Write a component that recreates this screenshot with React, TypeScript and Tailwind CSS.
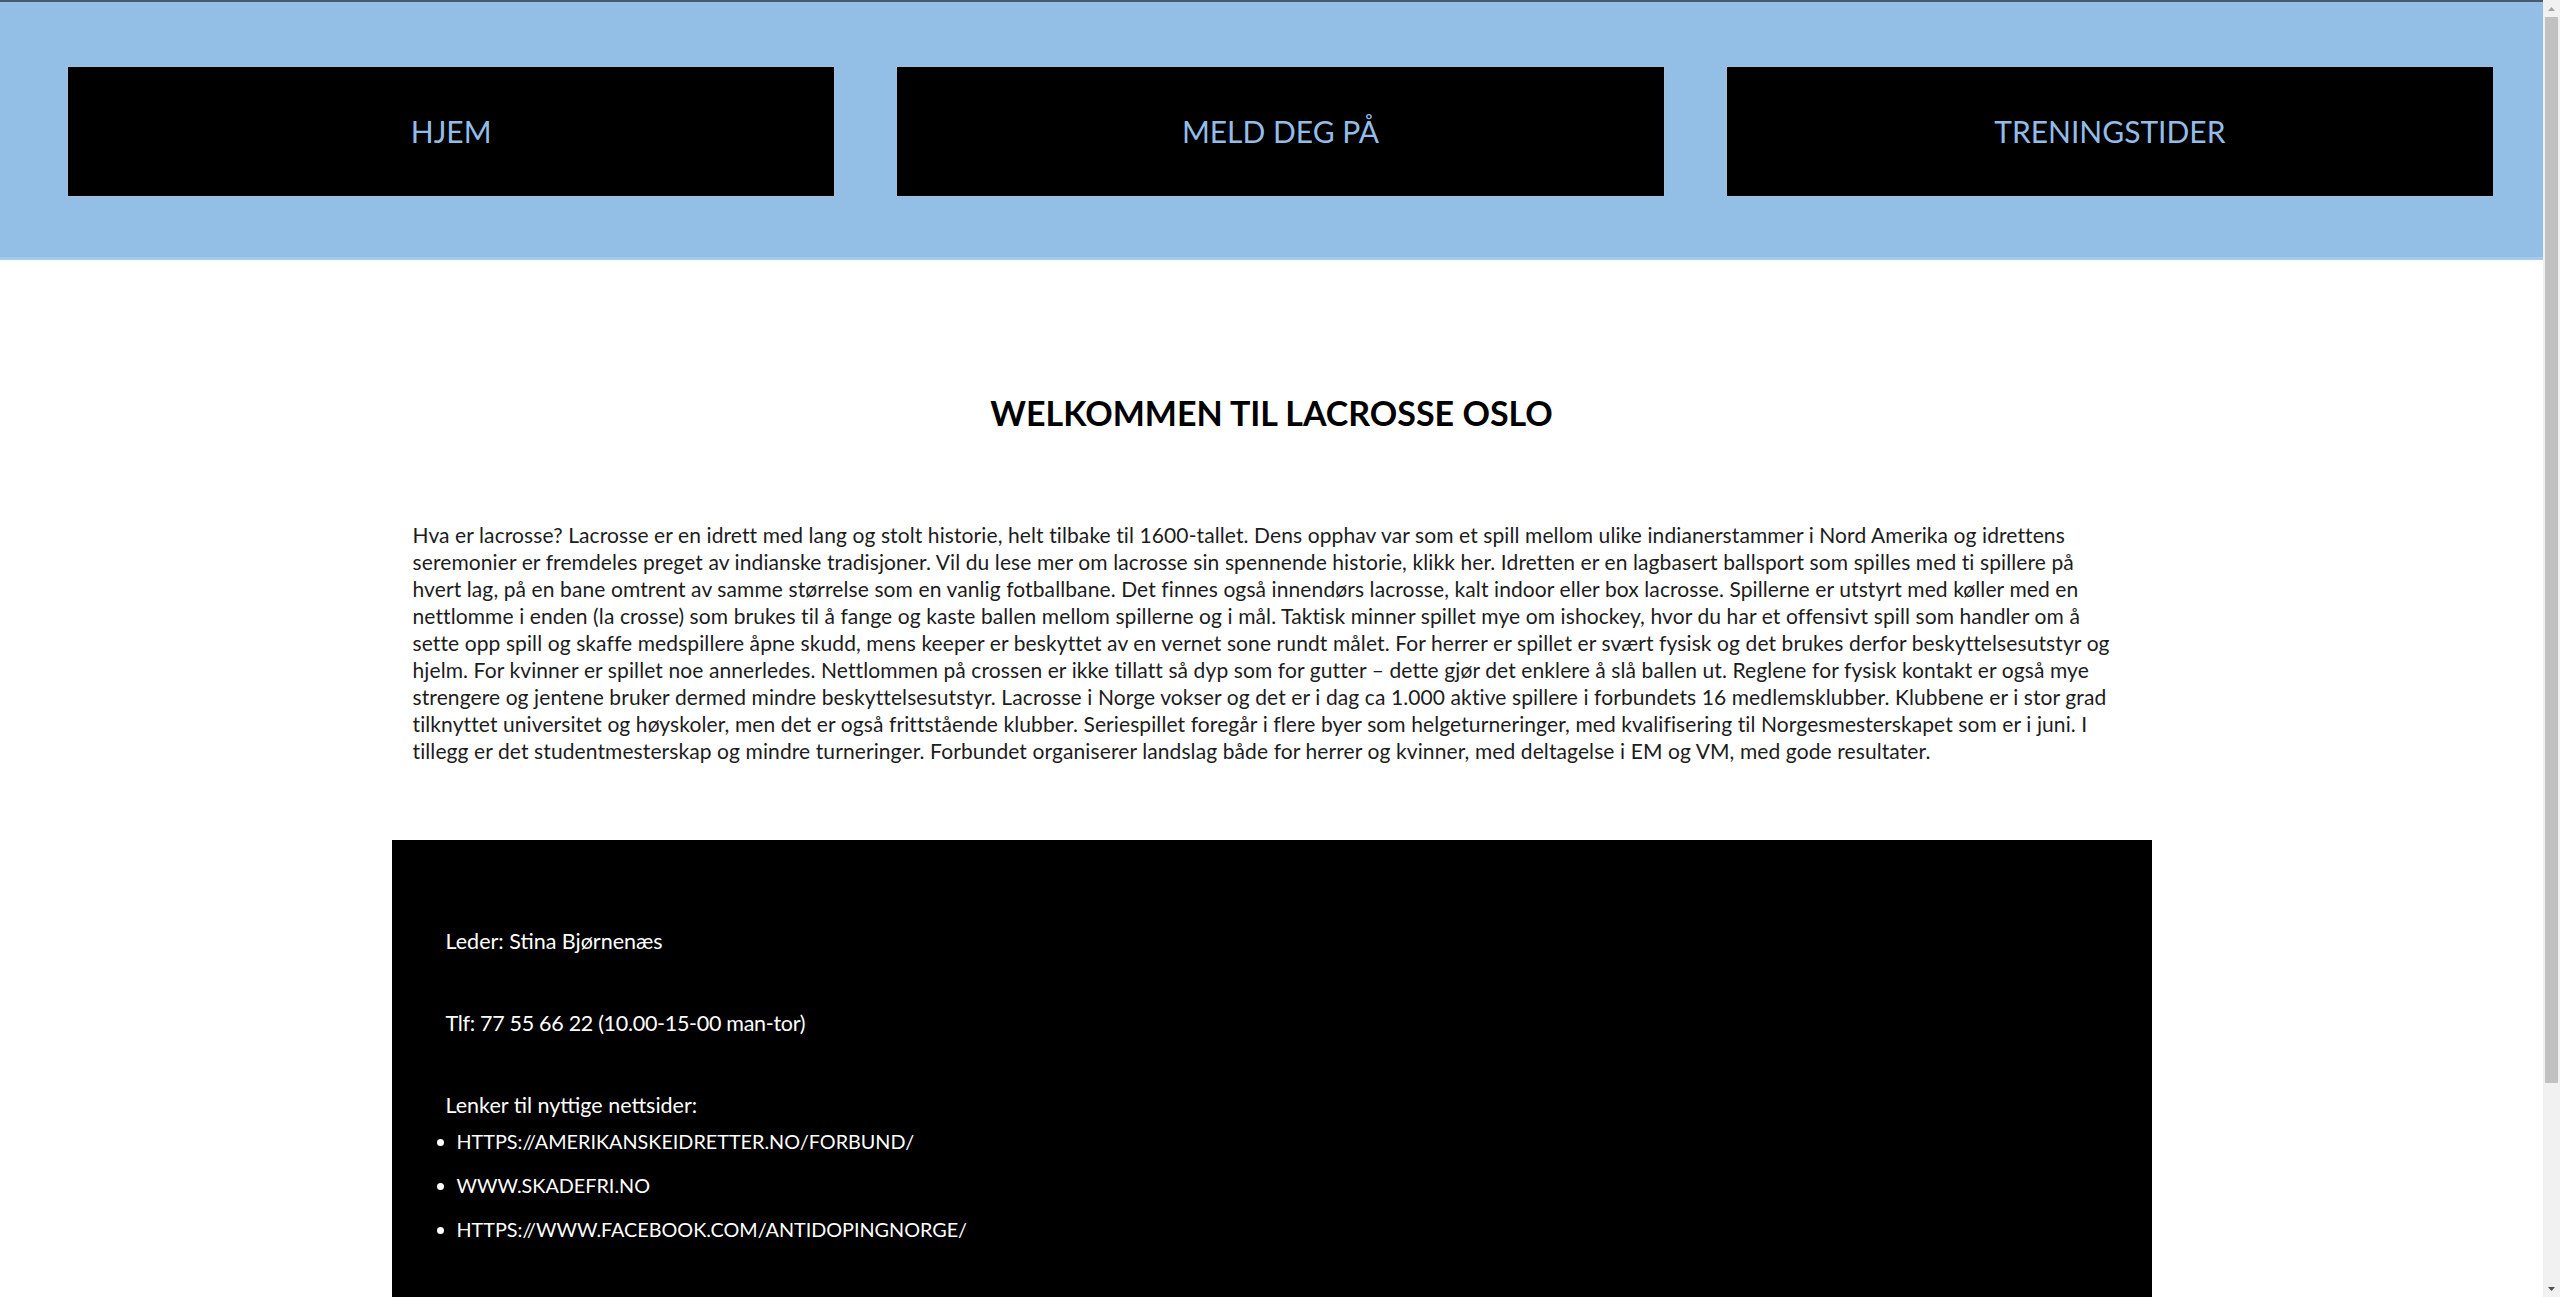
import React from 'react'

const navItems = ['HJEM', 'MELD DEG PÅ', 'TRENINGSTIDER']

const links = [
  'https://amerikanskeidretter.no/forbund/',
  'www.skadefri.no',
  'https://www.facebook.com/antidopingnorge/',
]

// linjeskift som i originalen
const intro = [
  'Hva er lacrosse? Lacrosse er en idrett med lang og stolt historie, helt tilbake til 1600-tallet. Dens opphav var som et spill mellom ulike indianerstammer i Nord Amerika og idrettens',
  'seremonier er fremdeles preget av indianske tradisjoner. Vil du lese mer om lacrosse sin spennende historie, klikk her. Idretten er en lagbasert ballsport som spilles med ti spillere på',
  'hvert lag, på en bane omtrent av samme størrelse som en vanlig fotballbane. Det finnes også innendørs lacrosse, kalt indoor eller box lacrosse. Spillerne er utstyrt med køller med en',
  'nettlomme i enden (la crosse) som brukes til å fange og kaste ballen mellom spillerne og i mål. Taktisk minner spillet mye om ishockey, hvor du har et offensivt spill som handler om å',
  'sette opp spill og skaffe medspillere åpne skudd, mens keeper er beskyttet av en vernet sone rundt målet. For herrer er spillet er svært fysisk og det brukes derfor beskyttelsesutstyr og',
  'hjelm. For kvinner er spillet noe annerledes. Nettlommen på crossen er ikke tillatt så dyp som for gutter – dette gjør det enklere å slå ballen ut. Reglene for fysisk kontakt er også mye',
  'strengere og jentene bruker dermed mindre beskyttelsesutstyr. Lacrosse i Norge vokser og det er i dag ca 1.000 aktive spillere i forbundets 16 medlemsklubber. Klubbene er i stor grad',
  'tilknyttet universitet og høyskoler, men det er også frittstående klubber. Seriespillet foregår i flere byer som helgeturneringer, med kvalifisering til Norgesmesterskapet som er i juni. I',
  'tillegg er det studentmesterskap og mindre turneringer. Forbundet organiserer landslag både for herrer og kvinner, med deltagelse i EM og VM, med gode resultater.',
]

const Scrollbar = () => (
  <div className="flex w-[17px] shrink-0 flex-col bg-[#f1f1f1]">
    <div className="flex h-[17px] items-center justify-center">
      <svg width="7" height="4" viewBox="0 0 7 4">
        <path d="M0 4 L3.5 0 L7 4 Z" fill="#a3a3a3" />
      </svg>
    </div>
    <div className="mx-[2px] h-[1066px] bg-[#c1c1c1]" />
    <div className="flex-1" />
    <div className="flex h-[17px] items-center justify-center">
      <svg width="7" height="4" viewBox="0 0 7 4">
        <path d="M0 0 L7 0 L3.5 4 Z" fill="#505050" />
      </svg>
    </div>
  </div>
)

export default function App() {
  return (
    <div className="flex h-[1297px] overflow-hidden bg-white">
      <div className="flex min-w-0 flex-1 flex-col">
        {/* toppmeny */}
        <header className="border-t-2 border-b-[3px] border-t-[#4a5a6e] border-b-[#a6caec] bg-[#93bfe7] pt-[64px] pb-[60px] pl-[67px] pr-[49px]">
          <nav className="flex gap-[61px]">
            {navItems.map((item) => (
              <a
                key={item}
                href="#"
                className="flex h-[131px] flex-1 items-center justify-center border border-[#a7bdd3] bg-black font-['Lato','Noto_Sans',sans-serif] text-[30px] text-[#93bde8]"
              >
                {item}
              </a>
            ))}
          </nav>
        </header>

        <main className="mx-auto w-[1760px]">
          <h1 className="mt-[131px] text-center font-['Lato','Noto_Sans',sans-serif] text-[34px] leading-[44px] font-bold text-black">
            WELKOMMEN TIL LACROSSE OSLO
          </h1>

          <p className="mt-[86px] px-[21px] font-['Lato','Noto_Sans',sans-serif] text-[21px] leading-[27px] tracking-[0.1px] text-[#1c1c1c]">
            {intro.map((line, i) => (
              <React.Fragment key={i}>
                {line}
                {i < intro.length - 1 && <br />}
              </React.Fragment>
            ))}
          </p>

          <footer className="mt-[76px] bg-black pt-[88px] pb-[80px] pl-[54px] font-['Lato','Noto_Sans',sans-serif] text-[21.5px] leading-[27px] text-white">
            <p className="mb-[55px]">Leder: Stina Bjørnenæs</p>
            <p className="mb-[55px] tracking-[-0.3px]">Tlf: 77 55 66 22 (10.00-15-00 man-tor)</p>
            <p>Lenker til nyttige nettsider:</p>
            <ul className="list-disc pl-[11px] text-[19.8px]">
              {links.map((l) => (
                <li key={l} className="py-[8.5px]">
                  <a href="#" className="uppercase text-white">
                    {l}
                  </a>
                </li>
              ))}
            </ul>
          </footer>
        </main>
      </div>
      <Scrollbar />
    </div>
  )
}
